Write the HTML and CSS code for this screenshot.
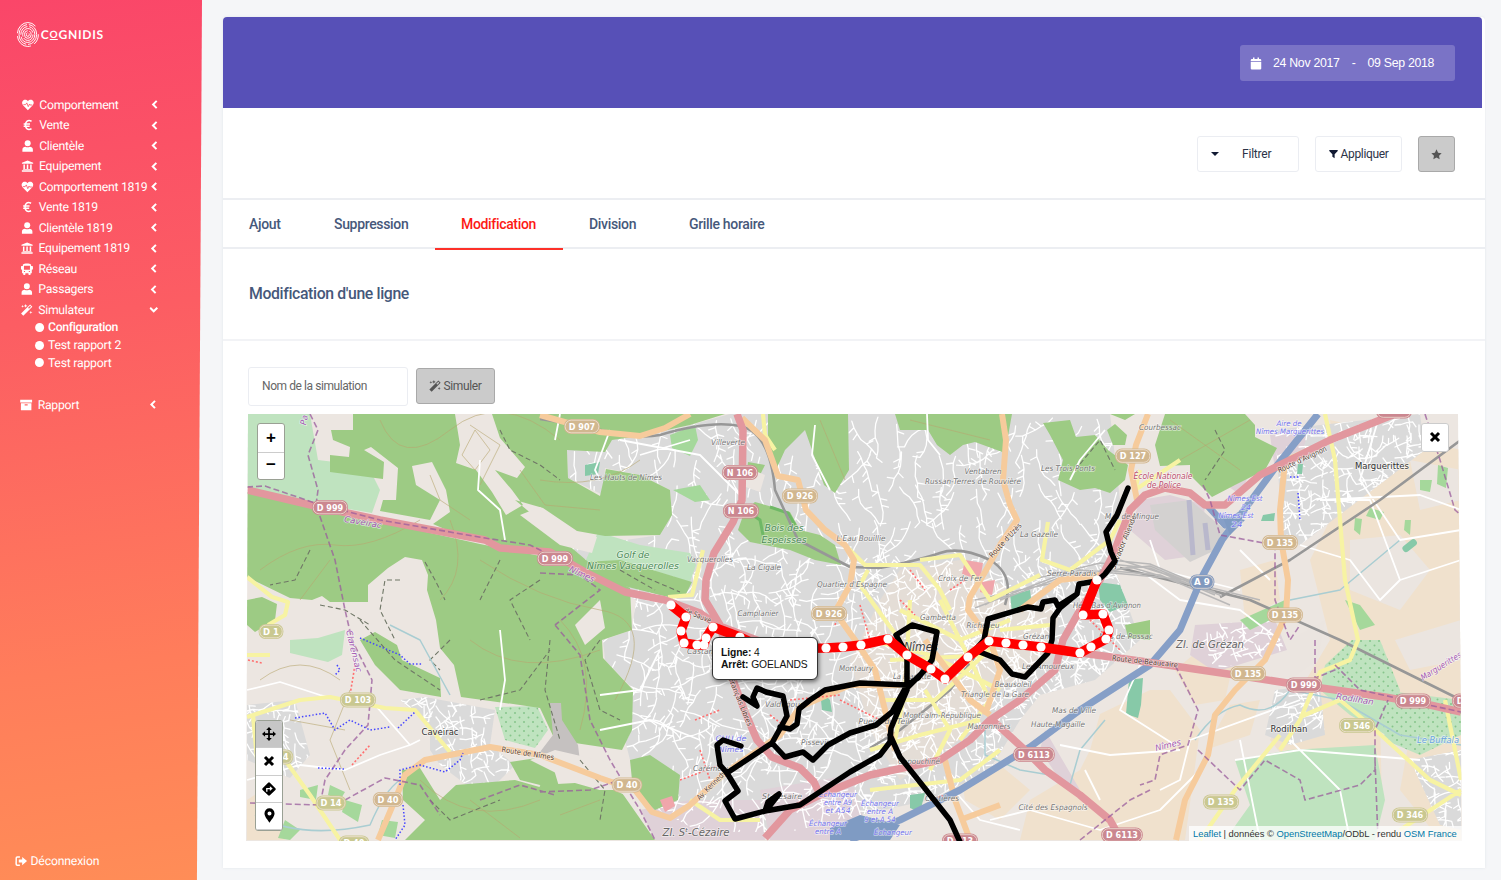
FILE: index.html
```html
<!DOCTYPE html>
<html lang="fr">
<head>
<meta charset="utf-8">
<title>Cognidis</title>
<link rel="stylesheet" href="styles.css">
</head>
<body>
<svg class="defs" width="0" height="0">
  <symbol id="i-heart" viewBox="0 0 16 16"><path fill="currentColor" d="M8 15 1.500 8.300C-.5 6 0 3 2 1.700 4 .6 6.500 1 8 3c1.500-2 4-2.400 6-1.300 2 1.300 2.500 4.300.5 6.600z"/><path d="M2 7.500h3l1.500-2.300 2 5 1.600-3.400.7 1.200H14" fill="none" stroke="#fb5265" stroke-width="1.100"/></symbol>
  <symbol id="i-euro" viewBox="0 0 16 16"><path d="M13 3C8 .5 5 3.500 5 8s3 7.500 8 5M2.500 6.500H11M2.500 9.500h8" fill="none" stroke="currentColor" stroke-width="2"/></symbol>
  <symbol id="i-user" viewBox="0 0 16 16"><circle cx="8" cy="4.200" r="4" fill="currentColor"/><path fill="currentColor" d="M1 15.500V13c0-3 2-4 4-4 2 1 4 1 6 0 2 0 4 1 4 4v2.500z"/></symbol>
  <symbol id="i-bank" viewBox="0 0 16 16"><path fill="currentColor" d="M8 .5 15.500 3.500V5H.5V3.500zM2.500 6h2v6H7V6h2v6h2.500V6h2v6l1 1H1.500l1-1zM.5 13.500h15v2H.5z"/></symbol>
  <symbol id="i-bus" viewBox="0 0 16 16"><path fill="currentColor" fill-rule="evenodd" d="M2.500 2C4 0 12 0 13.500 2v2H15q1 0 1 1v3q0 1-1.500 1v4.500H13V15q0 1-1 1h-1q-1 0-1-1v-1.500H6V15q0 1-1 1H4q-1 0-1-1v-1.500H1.500V9Q0 9 0 8V5q0-1 1-1h1.500zM4 3.500V9h8V3.500zM4 10.500v1.500h1.500v-1.500zm6.500 0v1.500H12v-1.500z"/></symbol>
  <symbol id="i-wand" viewBox="0 0 16 16"><path fill="currentColor" fill-rule="evenodd" d="M12.500.5 15.500 3.500 3.500 15.500.5 12.500zM12.500 2.300 9.800 5l1.200 1.200 2.700-2.700z"/><path fill="currentColor" d="m6.500 0 .7 1.800L9 2.500l-1.800.7L6.500 5l-.7-1.800L4 2.500l1.800-.7zM2.500 1l.5 1.500L4.500 3 3 3.500 2.500 5 2 3.500.5 3 2 2.500zM13.500 9l.6 1.500 1.600.5-1.600.7-.6 1.500-.6-1.500-1.500-.7 1.500-.5z"/></symbol>
  <symbol id="i-box" viewBox="0 0 16 16"><path fill="currentColor" fill-rule="evenodd" d="M0 1h16v3.500H0zM1 5.500h14V15H1zM6 7v1.500h4V7z"/></symbol>
  <symbol id="i-left" viewBox="0 0 10 10"><path d="M7 1 3 5l4 4" fill="none" stroke="currentColor" stroke-width="2.200"/></symbol>
  <symbol id="i-down" viewBox="0 0 10 10"><path d="M1 3l4 4 4-4" fill="none" stroke="currentColor" stroke-width="2.200"/></symbol>
  <symbol id="i-out" viewBox="0 0 16 16"><path fill="none" stroke="currentColor" stroke-width="2" d="M6.500 2.500H3q-1.500 0-1.500 1.500v8q0 1.500 1.500 1.500h3.500"/><path fill="currentColor" d="M5 6h4.500V2.500L16 8l-6.500 5.500V10H5z"/></symbol>
  <symbol id="i-cal" viewBox="0 0 16 16"><path fill="currentColor" d="M1 5V3.500Q1 2 2.500 2H4V0h2v2h4V0h2v2h1.500Q15 2 15 3.500V5zM1 6h14v8.500q0 1.500-1.500 1.500h-11Q1 16 1 14.500z"/></symbol>
  <symbol id="i-filter" viewBox="0 0 16 16"><path fill="currentColor" d="M.5 1h15v1.500L10 8.500V15.500L6 13V8.500L.5 2.500z"/></symbol>
  <symbol id="i-star" viewBox="0 0 16 16"><path fill="currentColor" d="m8 .5 2.300 4.800 5.200.7-3.800 3.700.9 5.300L8 12.500 3.400 15l.9-5.300L.5 6l5.200-.7z"/></symbol>
  <symbol id="i-move" viewBox="0 0 16 16"><path fill="currentColor" d="M8 0l3.200 3.500H9v3.500h3.500V4.800L16 8l-3.500 3.200V9H9v3.500h2.200L8 16l-3.200-3.500H7V9H3.500v2.200L0 8l3.500-3.200V7H7V3.500H4.800z"/></symbol>
  <symbol id="i-x" viewBox="0 0 12 12"><path d="M2 2l8 8M10 2l-8 8" stroke="currentColor" stroke-width="3" fill="none"/></symbol>
  <symbol id="i-dir" viewBox="0 0 16 16"><path fill="currentColor" d="M8 .2Q8.600.2 9 .8L15.300 7q.9 1 0 2L9 15.200q-1 .9-2 0L.7 9q-.9-1 0-2L7 .8Q7.400.2 8 .2z"/><path fill="none" stroke="#fff" stroke-width="1.500" d="M5.500 11V7.500h4"/><path fill="#fff" d="M9 4.800l3.200 2.700L9 10.200z"/></symbol>
  <symbol id="i-pin" viewBox="0 0 12 16"><path fill="currentColor" fill-rule="evenodd" d="M6 16C5 13.500.5 9.500.5 5.700a5.500 5.500 0 0 1 11 0C11.500 9.500 7 13.500 6 16zM6 3.600a2.200 2.200 0 1 0 0 4.400 2.200 2.200 0 0 0 0-4.400z"/></symbol>
</svg>

<div class="app">
  <aside class="sidebar">
    <div class="logo">
      <svg class="finger" viewBox="0 0 24 28" fill="none" stroke="#fff" stroke-width="1">
        <ellipse cx="11.500" cy="14" rx="1.500" ry="2" stroke-dasharray="7 2"/>
        <ellipse cx="11.500" cy="14" rx="3.500" ry="4" stroke-dasharray="17 2"/>
        <ellipse cx="11.500" cy="14" rx="5.400" ry="6.200" stroke-dasharray="14 1.500 18 2"/>
        <ellipse cx="11.500" cy="14" rx="7.300" ry="8.300" stroke-dasharray="22 2 12 2"/>
        <ellipse cx="11.500" cy="14" rx="9.200" ry="10.400" stroke-dasharray="15 2 28 2"/>
        <ellipse cx="11.500" cy="14" rx="11" ry="12.500" stroke-dasharray="11 4 20 3 26 9"/>
      </svg>
      <span class="brand">C<span class="brand-o">O</span>GNIDIS</span>
    </div>
    <nav class="menu">
      <a><svg><use href="#i-heart"/></svg><span>Comportement</span><svg class="chev"><use href="#i-left"/></svg></a>
      <a><svg><use href="#i-euro"/></svg><span>Vente</span><svg class="chev"><use href="#i-left"/></svg></a>
      <a><svg><use href="#i-user"/></svg><span>Clientèle</span><svg class="chev"><use href="#i-left"/></svg></a>
      <a><svg><use href="#i-bank"/></svg><span>Equipement</span><svg class="chev"><use href="#i-left"/></svg></a>
      <a><svg><use href="#i-heart"/></svg><span>Comportement 1819</span><svg class="chev"><use href="#i-left"/></svg></a>
      <a><svg><use href="#i-euro"/></svg><span>Vente 1819</span><svg class="chev"><use href="#i-left"/></svg></a>
      <a><svg><use href="#i-user"/></svg><span>Clientèle 1819</span><svg class="chev"><use href="#i-left"/></svg></a>
      <a><svg><use href="#i-bank"/></svg><span>Equipement 1819</span><svg class="chev"><use href="#i-left"/></svg></a>
      <a><svg><use href="#i-bus"/></svg><span>Réseau</span><svg class="chev"><use href="#i-left"/></svg></a>
      <a><svg><use href="#i-user"/></svg><span>Passagers</span><svg class="chev"><use href="#i-left"/></svg></a>
      <a><svg><use href="#i-wand"/></svg><span>Simulateur</span><svg class="chev"><use href="#i-down"/></svg></a>
      <div class="submenu">
        <a class="active">Configuration</a>
        <a>Test rapport 2</a>
        <a>Test rapport</a>
      </div>
      <a class="report"><svg><use href="#i-box"/></svg><span>Rapport</span><svg class="chev"><use href="#i-left"/></svg></a>
    </nav>
    <a class="logout"><svg><use href="#i-out"/></svg>Déconnexion</a>
  </aside>

  <main class="card">
    <header class="banner">
      <div class="dates"><svg><use href="#i-cal"/></svg><span>24 Nov 2017</span><span class="dash">-</span><span>09 Sep 2018</span></div>
    </header>
    <div class="filters">
      <button class="btn filter"><i class="caret"></i><span>Filtrer</span></button>
      <button class="btn apply"><svg><use href="#i-filter"/></svg><span>Appliquer</span></button>
      <button class="btn grey fav"><svg><use href="#i-star"/></svg></button>
    </div>
    <div class="tabs">
      <a>Ajout</a><a>Suppression</a><a class="on">Modification</a><a>Division</a><a>Grille horaire</a>
    </div>
    <h1 class="title">Modification d'une ligne</h1>
    <div class="form">
      <div class="input">Nom de la simulation</div>
      <button class="btn grey simulate"><svg><use href="#i-wand"/></svg><span>Simuler</span></button>
    </div>
    <div class="map">
      <svg class="tiles" viewBox="246 414 1216 427">
        <defs>
          <clipPath id="urban"><path d="M612 440 680 428 730 414 1110 414 1120 500 1110 555 1140 640 1095 680 1040 695 1020 720 990 770 930 800 860 815 790 832 700 832 640 800 625 740 625 715 634 690 605 660 603 640 632 630 636 600 605 580 560 572 542 552 660 535 672 515 670 490 640 475 605 468 603 495 568 478 567 450zM400 700 425 697 495 710 490 745 515 765 500 780 480 795 440 765 430 750 430 725zM1275 430 1420 414 1425 450 1300 545 1283 540zM1275 690 1320 685 1325 735 1290 745 1265 735zM1410 760 1461 750 1461 830 1440 825zM247 705 295 700 310 755 290 778 247 760zM1195 625 1270 620 1285 650 1215 670z"/></clipPath>
          <pattern id="trees" width="9" height="9" patternUnits="userSpaceOnUse"><circle cx="2" cy="2" r="1" fill="#86c58b"/><circle cx="6.500" cy="6.500" r="1" fill="#86c58b"/></pattern>
        </defs>
        <rect x="246" y="413" width="1216" height="428" fill="#ece6e1"/>
        <g fill="#f0e1cd">
          <path d="M1100 714 1150 690 1170 690 1200 730 1185 840H1020L1030 800 1080 770 1090 750zM1205 645 1235 655 1225 700 1195 705 1175 670zM1230 705 1260 700 1250 735 1205 750zM1330 420 1461 450V840H1380L1365 760 1310 790 1270 740 1330 640 1310 560 1340 500zM1240 570 1275 560 1280 600 1245 620zM1150 790 1175 790 1155 840H1130zM247 800 262 790 285 840H247zM960 770 1000 765 1030 790 1000 820 965 800z"/>
        </g>
        <g fill="#ebe5e0"><path d="M1350 540 1400 535 1430 570 1400 610 1350 590zM1380 720 1410 735 1400 790 1440 840H1350L1382 800zM1410 460 1461 470V500L1420 510zM1290 640 1325 620 1318 660 1290 680zM1395 640 1461 620V660L1410 670z"/></g>
        <path fill="#dadada" d="M612 440 680 428 730 414 1110 414 1120 500 1110 555 1140 640 1095 680 1040 695 1020 720 990 770 930 800 860 815 790 832 700 832 640 800 625 740 625 715 634 690 605 660 603 640 632 630 636 600 605 580 560 572 542 552 660 535 672 515 670 490 640 475 605 468 603 495 568 478 567 450zM400 700 425 697 495 710 490 745 515 765 500 780 480 795 440 765 430 750 430 725zM1275 430 1420 414 1425 450 1300 545 1283 540zM1275 690 1320 685 1325 735 1290 745 1265 735zM1410 760 1461 750V830L1440 825zM247 705 295 700 310 755 290 778 247 760zM520 570 550 564 560 600 545 625 538 600z"/>
        <path fill="#e4ddd6" d="M900 570 960 560 1010 590 1060 610 1050 660 1000 690 960 740 900 780 870 730 850 660 880 600z"/>
        <!-- industrial and airport -->
        <g fill="#dfd1d8"><path d="M1195 625 1275 620 1287 650 1215 672 1190 655zM1140 500 1170 495 1205 505 1200 555 1165 560 1130 530zM640 810 690 800 760 800 765 840H655zM760 790 850 775 870 840H770zM1045 730 1080 790 1060 780 1040 750zM1270 435 1310 425 1300 460 1275 470zM1220 480 1250 472 1240 495z"/></g>
        <path fill="#d3d1d0" d="M1150 505 1190 500 1225 530 1220 548 1190 562 1155 530z"/>
        <path stroke="#b9b8cc" stroke-width="5" d="M1189 500 1193 555M1205 523 1208 550" fill="none"/>
        <g id="streets" clip-path="url(#urban)"></g>
        <path fill="#bfe3bf" d="M247 414H310L318 460 368 466 380 490 372 513 320 504 247 488zM290 640 318 638 345 630 342 655 328 662 290 653zM1235 760 1290 750 1375 745 1385 800 1375 840H1225L1250 805zM1325 665 1352 640 1380 640 1400 690 1395 740 1350 715 1320 690zM1380 690 1461 700V735L1420 755 1385 740zM495 707 537 706 548 730 535 748 505 740zM598 532 640 545 690 553 696 565 690 582 640 566 585 562z"/>
        <path fill="url(#trees)" d="M1380 690 1461 700V735L1420 755 1385 740zM495 707 537 706 548 730 535 748 505 740zM1325 665 1352 640 1380 640 1400 690 1350 700z"/>
        <g class="forest">
          <path d="M353 414H455L460 445 456 463 476 470 492 492 506 515 523 505 512 490 495 470 517 478 525 467 500 438 492 414H725L690 425 640 436 612 440 605 452 567 450 568 478 600 496 606 469 640 475 670 490 672 515 660 535 605 536 577 531 543 508 515 500 545 525 600 572 630 588 632 630 602 640 603 658 633 690 632 730 622 750 555 740 540 708 520 705 461 697 454 665 440 648 436 620 427 590 428 575 422 560 405 557 388 568 368 585 368 602 330 602 322 596 312 600 290 598 247 577V492L315 508 390 524 480 544 545 557 546 550 500 545 470 540 433 524 450 512 446 490 432 462 412 466 416 485 440 500 430 520 380 511 383 500 396 500 398 468 371 447 364 450 384 462 383 479 330 472 330 455 349 457 350 447 333 440 331 430 353 430z"/>
          <path d="M768 414H815L805 430 785 450 775 472 768 455zM812 414H848L849 470 835 493 824 485 812 450 805 430zM748 462 765 465 760 475 745 485zM745 510 755 502 790 512 800 530 820 535 835 545 841 565 815 560 790 550 750 542 738 530zM895 414H1012L1005 453 975 442 963 445 950 455 937 445 928 430 900 430zM1043 423 1070 420 1076 437 1095 435 1108 450 1128 465 1125 480 1110 493 1095 488 1080 490 1058 480 1063 460 1050 435zM1107 430 1115 424 1127 435 1125 445 1113 445zM1165 414H1245L1255 425V437L1277 448 1265 470 1235 485 1212 497 1190 475V465L1160 466 1155 445z"/>
          <path d="M583 562 620 560 692 582 685 596 668 597 600 580zM360 640 375 632 397 645 402 660 440 678 441 697 400 690 375 665zM402 770 420 768 440 800 456 785 515 780 550 790 620 790 655 840H405L425 820 403 800zM630 760 650 755 680 775 678 800 655 810 633 790zM540 785 575 783 610 793 650 840H530zM247 600 262 597 277 604 275 620 255 632 247 625zM510 762 550 756 560 790 520 780z"/>
          <path d="M1110 414 1135 414 1125 420zM1125 625 1150 620 1150 640 1128 638z"/>
        </g>
        <path fill="none" stroke="#6fb866" stroke-width="3" d="M748 512 760 520 763 535M770 507 788 513 795 525"/>
        <g fill="#a5d89b"><path d="M300 790 318 785 316 800 300 797zM330 785 345 792 340 800 328 795zM345 800 362 805 358 822 342 812zM382 820 398 822 395 838 378 835zM255 800 275 803 270 812zM285 820 300 830 290 840 278 838zM670 435 695 425 698 440 690 456 672 448zM673 490 700 485 710 500 695 502zM1438 465 1448 468 1446 488 1437 484zM1370 508 1384 512 1380 520 1366 516zM1420 480 1432 480 1430 492 1420 490zM1240 620 1285 600 1290 610 1250 630zM1345 600 1360 605 1375 625 1360 630zM1405 520 1411 520 1410 535 1404 530zM1355 518 1362 519 1360 535 1354 530z"/></g>
        <g fill="#87c9a8"><path d="M1129 680 1143 678 1141 705 1138 718 1126 714zM1010 595 1030 590 1032 606 1012 612zM820 690 830 700 832 712 822 710zM910 795 925 793 920 812 910 808zM1098 582 1120 585 1128 605 1110 612 1100 600zM1298 464 1303 464 1302 474 1297 474zM1263 515 1275 513 1274 521 1261 521zM585 465 600 462 598 474 585 476z"/><rect x="1402" y="542" width="16" height="7" rx="3" transform="rotate(-38 1410 546)"/></g>
        <path fill="#c5c1c0" d="M550 703 561 703 562 720 578 745 580 762 540 752 553 735z"/>
        <path fill="#ece6e1" d="M540 507 575 531 597 537 592 553 560 545 520 515zM575 625 600 600 605 628 585 645zM740 465 765 475 760 492 740 485zM530 760 555 750 620 765 625 795 590 780 560 775z"/>
        <path fill="#f0a6ab" d="M965 560 983 563 980 580 962 574zM982 582 995 580 992 595 980 592zM660 800 672 796 675 806 665 812z"/>

        <g class="tracks">
          <path d="M260 570Q300 540 335 545T420 520M380 420Q400 470 450 430T560 440M450 520Q470 570 440 600M480 560Q540 600 600 610T615 700M330 560 300 600M540 480Q600 490 640 460M560 620Q600 660 580 730M470 640Q520 680 600 650M260 680Q300 650 340 680M350 690 330 740 350 790M290 720 345 730M420 780Q470 830 540 800M470 800 520 838M560 815 600 800M475 430 490 450 475 470 462 455zM470 425 500 445 480 485M1170 420 1240 470M1180 460 1250 420M820 420 845 480M910 420 990 440M520 470 545 505 600 510M430 475 440 500 470 520"/>
        </g>
        <g class="paths">
          <path d="M500 430 510 450 540 465 560 480M310 550 295 580 270 585M320 605 345 610 370 625M400 580 385 580 380 610 395 640M360 620 395 660 440 690M425 562 435 580 445 600M500 560 480 600M540 580 510 600 530 640M550 640 545 690 560 740M600 640 585 660 600 710 620 720M580 760 605 790 600 820M1215 430 1225 450 1205 480M1075 470 1100 440 1115 470M620 570 655 590M640 575 680 592M480 700 520 690 550 650M430 800 450 820 500 800M450 640 430 660 440 670"/>
        </g>
        <g class="water"><path d="M390 625 420 640 450 695M255 815Q300 840 370 825 385 790 400 780M985 730 985 755 1020 770 1050 775 1070 785 1080 750 1105 720M1195 740Q1215 710 1240 705 1270 720 1290 690L1340 700 1400 735 1461 745M1290 600 1340 590 1400 540"/></g>
        <g class="white">
          <path d="M247 690 280 682 320 695 340 700M247 780 300 765 345 770 380 755 410 745 420 740M375 705 410 745M480 460 478 490 500 510 505 540M500 630 505 680 500 710M1140 570 1180 600 1240 610 1280 640M1300 545 1350 560 1380 600 1400 580 1461 560M1330 500 1370 500 1400 580M1235 760 1300 750 1420 760M1290 740 1340 790 1350 840M1160 790 1180 780 1190 740 1300 700M1060 745 1110 755 1180 750M1085 770 1100 800M990 820 1030 810 1100 830 1160 810 1200 770M945 780 980 820 1020 830M1150 540 1160 570 1240 590M1240 550 1270 580M1380 414 1360 480 1400 540 1461 530M1240 740 1260 840M1320 500 1420 495 1461 510M600 695 640 690 660 650M600 730 650 720 700 740M1080 640 1140 665 1120 710 1175 745M560 414 555 440M610 430 595 470 600 480M620 440 700 455 745 500M690 440 640 455M815 425 812 455 830 490M927 414 928 440 940 455M1070 480 1080 460 1105 430"/>
        </g>
        <g class="rail">
          <path d="M540 419Q580 425 610 432T660 435Q710 420 740 426T775 490L798 540 850 567 880 568Q920 560 940 553T990 560Q1015 575 1005 605M870 748 900 730 950 690 980 650M1461 440 1380 500 1290 560 1220 597M1120 568 1250 600 1340 640 1461 700"/>
        </g>
        <g fill="none" stroke="#b9b8b8" stroke-width="1.400"><path d="M985 605 1030 580 1100 563 1150 568 1215 595M975 608 1060 575 1150 566 1222 596M1000 600 1080 570 1190 580M1110 560 1150 564 1200 585M975 600 1020 590 1130 567 1215 592M1100 570 1160 575 1230 605M1120 560 1200 585 1260 600"/></g>
        <g class="yellow">
          <path d="M247 577 272 597 288 602 285 615 268 625M247 717 300 700 330 697 385 708 415 710 450 752M247 655H270M285 760 310 795 340 840M253 715 258 770M1325 414 1335 460 1340 520 1345 580 1358 640 1350 660 1320 672 1300 720 1280 750M1300 717 1340 700 1370 725 1430 780 1461 795M1280 735 1235 790 1200 840M1445 700 1461 780M1400 830 1461 790M668 597 692 595 703 550M763 414 765 435 775 450M845 545 865 565 920 565 940 590 950 610M868 570 860 585 885 620 900 640M1048 522 1042 560 1070 570 1110 540 1120 520M920 560 960 555 990 600 1040 575M870 640 930 655 1000 690M900 610 960 640 1010 620M880 700 935 700 1000 640M910 600 905 690 895 740M940 600 960 640 990 700 960 740M890 660 990 655M925 690 950 730 930 770M870 790 960 780 1000 750M690 800 720 820 760 820M870 750 920 735 980 720M1000 630 1050 625M1140 470 1135 490 1180 460M1285 460 1330 440"/>
        </g>
        <path class="orange" d="M540 415 600 432 640 436 665 428 690 414M742 418 765 440 778 476 798 480 806 510 825 530 845 545 854 560 850 585 835 612 855 640 875 670 885 710 895 750M1002 414 1006 440 1003 480 1010 505 1017 520 1000 545 985 572 970 597 968 610 990 640 1000 670 985 715M1148 414 1136 445 1131 470 1137 500M1285 462 1280 510 1281 540 1288 580 1286 615 1265 660 1235 690 1215 715 1208 755 1185 800 1176 840M378 840 395 800 405 775 425 760 490 747 540 755 600 778 635 790 652 812 670 818 690 805 725 773 780 735 800 707 850 685 900 685M925 640 970 700 990 715M945 760 955 800 970 840M960 820 1000 805M1020 610 1060 580 1100 575"/>
        <path class="blue" d="M1318 414 1275 468 1222 540 1203 575 1180 630 1150 665 1080 710 1030 747 960 790 900 820 850 840M1207 505 1225 525 1240 515"/>
        <path d="M830 828 860 815 900 825 890 840H830zM1222 515 1245 520 1230 535z" fill="#7f9bc3"/>
        <path class="trunk" d="M247 490 315 506 380 520 485 540 500 548 550 552 585 572 625 592 665 600 700 613 717 625 770 645M737 414 743 430 742 500 733 522 714 553 706 580 705 600 720 625 733 680 745 712 757 740 772 757 800 768 814 782 820 795M765 838 790 810 820 795 870 775 940 760 970 740 990 720 1020 700 1055 670 1063 640 1080 610 1100 580 1113 555 1130 510 1145 495 1165 488 1190 493 1205 505 1225 505 1260 475 1330 440 1395 414M990 718 1025 750 1045 770 1080 795 1110 820 1120 838M1045 648 1140 661 1235 675 1300 685 1385 697 1430 705 1461 712"/>
        <g class="borders"><path d="M310 414 318 430 308 455 318 490 316 505 335 560 345 610 352 640 372 680 368 725 345 750 325 780 320 805 250 803M247 487 265 486 315 503 380 520 485 538 530 545 560 560M540 573 580 575 600 590 555 625M555 625 580 655 590 720 610 760 640 810 655 840M345 800 385 778 420 785 440 815M480 800 520 785 555 795M1203 485 1210 500 1220 535 1275 545 1275 600 1290 640 1300 625M1140 661 1175 665 1198 710 1188 745 1160 755 1155 780 1140 785M1198 750 1240 790 1265 760 1300 780 1305 800 1360 785 1375 770 1375 730 1388 700M1425 414 1440 460 1455 510 1461 515M1080 840 1130 800 1150 790M1335 665 1360 690 1461 712M1315 640 1315 678 1340 668M1375 760 1378 840M540 792 590 790 620 780"/></g>
        <g class="bluedots"><path d="M360 638 400 655 410 664 422 664M295 718 325 713 335 730 350 720 370 730 390 727M398 728 415 712M318 768 345 769M400 785 400 770 420 765 445 772 460 760 463 753M403 805 405 825 395 840M337 665 340 670 335 675M1298 493 1300 520M1290 477 1300 477"/></g>
        <g class="reddots"><path d="M248 660 262 663M352 765 370 745M355 665 350 695M680 780 720 765M770 715 790 730M790 700 840 695M700 750 710 780M840 700 880 720M910 570 925 590M900 600 915 615M950 590 965 580M930 800 945 795M1090 620 1120 650M860 605 870 640M835 625 840 610M695 720 720 710"/></g>
        <g id="labels"></g>
        <g id="shields"></g>

        <g class="network">
          <path d="M1128 488 1117 515 1106 532 1111 552 1115 561 1105 574 1097 581 1079 584 1077 594 1058 606 1055 600 1043 602 1041 609 1028 607 988 619 984 640 968 658 945 680M1077 594 1060 608 1053 618 1052 640 1048 653 1025 677 1012 674 1000 660 980 652"/>
          <path d="M907 655 896 635 912 625 937 632 932 660 918 678 907 685 907 655M925 670 905 690M907 685 860 683 845 686 825 690 810 700 799 709 797 724 790 729 780 727M743 697 757 706 753 697 757 688 766 692 783 696 787 716 772 743 727 773 720 765 717 745 723 740 741 746M772 743 785 757 803 752 813 760 828 745 850 733 876 725 892 712 907 685M727 773 738 791 725 801 735 819 765 811 800 805 850 772 880 755 890 742 891 728 907 690M765 811 768 802 779 794 768 808M890 735 900 757 950 820 960 842"/>
        </g>
        <polyline id="line4" points="671,605 686,617 681,631 684,643 697,645 704,645 706,638 713,627 740,637 765,649 826,648 843,647 861,645 888,639 907,655 931,669 945,679 968,657 989,641 1006,643 1023,645 1041,647 1080,653 1091,647 1106,639 1109,630 1103,614 1083,615 1097,580"/>
        <g id="stops"></g>
      </svg>

      <div class="zoom"><b>+</b><b>−</b></div>
      <div class="close"><svg><use href="#i-x"/></svg></div>
      <div class="tools">
        <i class="sel"><svg width="14" height="14"><use href="#i-move"/></svg></i>
        <i><svg width="12" height="12"><use href="#i-x"/></svg></i>
        <i><svg width="14" height="14"><use href="#i-dir"/></svg></i>
        <i><svg width="11" height="15"><use href="#i-pin"/></svg></i>
      </div>
      <div class="popup"><div><b>Ligne:</b> 4</div><div><b>Arrêt:</b> GOELANDS</div></div>
      <div class="credit"><a>Leaflet</a> | données © <a>OpenStreetMap</a>/ODbL - rendu <a>OSM France</a></div>
    </div>
  </main>
</div>
<script src="map.js"></script>
</body>
</html>
```
FILE: styles.css
```css
* { box-sizing: border-box; }
body { margin: 0; background: #f5f6f8; font-family: Roboto, "Liberation Sans", sans-serif; overflow: hidden; }
.defs { position: absolute; }
.app { display: flex; width: 1501px; height: 880px; }

.sidebar {
  width: 202px; flex: none; height: 880px; padding: 20px 0 10px 0; margin-right: 21px;
  display: flex; flex-direction: column; color: #fff; position: relative;
  transform: skewX(-0.33deg); transform-origin: 0 0;
  background: linear-gradient(172deg, #fa4669 0%, #fc5d63 36%, #ff7d5b 75%, #ff8d57 100%);
  box-shadow: -8px 0 0 #fc6562;
}
.logo { display: flex; align-items: center; height: 28px; padding-left: 17px; }
.finger { width: 23px; height: 27px; }
.brand { font: 700 12px Lato, sans-serif; letter-spacing: .75px; margin-left: 1px; }
.brand-o { display: inline-block; font-size: 10px; line-height: 9px; border-bottom: 1.500px solid #fff; vertical-align: 1px; letter-spacing: 0; margin-right: 1px; }
.menu { margin-top: 46.500px; display: flex; flex-direction: column; }
.menu > a { display: flex; align-items: center; height: 20.500px; padding-left: 22px; font-size: 12.200px; letter-spacing: -.24px; width: 162px; white-space: nowrap; }
.menu > a > svg { width: 13px; height: 12px; flex: none; margin-right: 5px; }
.menu > a > span { flex: 1; }
.menu > a > .chev { width: 9px; height: 9px; margin: 0 2px 0 0; }
.submenu { display: flex; flex-direction: column; padding-left: 37px; margin-top: -1.500px; }
.submenu a { display: flex; align-items: center; height: 17.800px; font-size: 12.200px; letter-spacing: -.2px; gap: 4px; }
.submenu a::before { content: ""; width: 9px; height: 9px; border-radius: 50%; background: #fff; }
.submenu .active { font-weight: 500; letter-spacing: -.34px; }
.menu > .report { margin-top: 22.500px; }
.logout { display: flex; align-items: center; gap: 4px; padding-left: 19.500px; font-size: 12.200px; letter-spacing: -.15px; margin-top: auto; height: 19px; }
.logout svg { width: 12px; height: 12px; }

.card { width: 1262px; height: 851px; margin-top: 17px; background: #fff; box-shadow: 0 0 3px #e1e4ea; border-radius: 4px 4px 0 0; display: flex; flex-direction: column; clip-path: polygon(-3px -3px, 1262px -3px, 1268px 855px, -5px 855px); }
.banner { height: 91px; width: 1259px; background: #5750b7; border-radius: 4px 4px 0 0; display: flex; justify-content: flex-end; padding: 28px 27px 0 0; }
.dates { height: 36px; width: 215px; background: #7a73c6; border-radius: 3px; color: #fff; display: flex; align-items: center; font: 12.300px "Liberation Sans", sans-serif; letter-spacing: -.28px; padding-left: 10px; white-space: nowrap; }
.dates svg { width: 12px; height: 13px; margin-right: 11px; }
.dates .dash { margin: 0 12px; }
.filters { height: 90px; display: flex; justify-content: flex-end; padding: 28px 30px 0 0; }
.btn { height: 36px; border: 1px solid #ebedf2; border-radius: 3px; background: #fff; color: #2c3347; font: 12px Roboto, sans-serif; letter-spacing: -.35px; display: flex; align-items: center; justify-content: center; padding: 0; }
.filter { width: 102px; margin-right: 16px; justify-content: flex-start; padding-left: 13px; letter-spacing: -.2px; }
.caret { border: 4px solid transparent; border-top-color: #111a33; border-bottom: 0; margin-right: 23px; }
.apply { width: 87px; margin-right: 16px; gap: 3px; }
.apply svg { width: 9px; height: 10px; color: #111a33; }
.grey { background: #cbcbcb; border-color: #a9a9a9; color: #555; }
.fav { width: 37px; }
.fav svg { width: 11px; height: 11px; }
.tabs { height: 51px; border-top: 2px solid #eceef2; border-bottom: 2px solid #eceef2; display: flex; width: 1262px; }
.tabs a { height: 50px; padding: 15px 26px 0; font: 500 14px/18px Roboto, sans-serif; letter-spacing: -.33px; color: #46587a; white-space: nowrap; }
.tabs .on { color: #fd1a14; border-bottom: 2px solid #fd3129; }
.tabs a:nth-child(1) { width: 85px; }
.tabs a:nth-child(2) { width: 127px; }
.tabs a:nth-child(3) { width: 128px; }
.tabs a:nth-child(4) { width: 100px; }
.title { margin: 0; height: 92px; border-bottom: 2px solid #f2f3f6; padding: 36px 26px 0; font: 500 15.800px/18px Roboto, sans-serif; letter-spacing: -.37px; color: #46587a; }
.form { display: flex; height: 73px; padding: 26px 25px 0; }
.input { width: 160px; height: 39px; border: 1px solid #ebedf2; border-radius: 3px; font: 12px/37px Roboto, sans-serif; letter-spacing: -.43px; color: #666; padding-left: 13px; }
.simulate { width: 79px; margin: 1px 0 0 8px; gap: 2px; }
.simulate svg { width: 12px; height: 12px; }

.map { position: relative; width: 1216px; height: 427px; margin-left: 23px; clip-path: polygon(2px 0, 1212px 0, 1216px 100%, 0 100%); font-family: "Liberation Sans", sans-serif; }
.tiles { display: block; width: 1216px; height: 427px; }
.tiles g, .trunk, .orange, .blue { stroke-linejoin: round; }
.forest { fill: #9dcb84; }
.tracks, .paths, .water, .white, .yellow, .orange, .blue, .trunk, .rail, .borders, .bluedots, .reddots, .network { fill: none; }
.tracks { stroke: #b7a66f; stroke-width: 1; opacity: .6; }
.paths { stroke: #6f7666; stroke-width: 1.100; stroke-dasharray: 5 3; }
.water { stroke: #a9cdd2; stroke-width: 1.500; }
.white { stroke: #fff; stroke-width: 1.800; }
#streets { fill: none; stroke: #fff; stroke-width: 1.300; stroke-linecap: round; stroke-linejoin: round; }
.rail { stroke: #979797; stroke-width: 2.600; }
.yellow { stroke: #f7f3a3; stroke-width: 4.200; }
.orange { stroke: #f6cb9c; stroke-width: 6; }
.blue { stroke: #869fc7; stroke-width: 7; }
.trunk { stroke: #e2979e; stroke-width: 7.500; }
.borders { stroke: #9a5c9c; stroke-width: 1.600; stroke-dasharray: 6 3; opacity: .75; }
.bluedots { stroke: #4545ff; stroke-width: 1.500; stroke-dasharray: 1.500 2; }
.reddots { stroke: #ff6f6f; stroke-width: 1.600; stroke-dasharray: 2 2; }
.network { stroke: #000; stroke-width: 5.500; stroke-linecap: round; }
#line4 { fill: none; stroke: #f00; stroke-width: 9.500; stroke-linejoin: round; }
#stops { fill: #fff; }
#labels text { font-family: "DejaVu Sans", sans-serif; paint-order: stroke; stroke: rgba(255,255,255,.55); stroke-width: 1.500px; text-anchor: middle; }
#shields text { font: bold 8.800px "DejaVu Sans", sans-serif; fill: #fff; text-anchor: middle; }

.zoom, .tools, .close { position: absolute; background: #fff; border: 1px solid #9aa094; border-radius: 3px; color: #000; }
.zoom { left: 11px; top: 9px; width: 28px; height: 57px; }
.zoom b { display: block; height: 28px; font: bold 17px/27px "Liberation Sans", sans-serif; text-align: center; }
.zoom b + b { border-top: 1px solid #ccc; height: 27px; line-height: 24px; }
.close { left: 1175px; top: 9px; width: 28px; height: 29px; display: flex; align-items: center; justify-content: center; border-color: #ccc; }
.close svg { width: 12px; height: 12px; margin-top: -2px; }
.tools { left: 9px; top: 306px; width: 28px; height: 111px; overflow: hidden; }
.tools i { display: flex; height: 27.250px; align-items: center; justify-content: center; border-bottom: 1px solid #ccc; }
.tools .sel { background: #c6c6c6; }
.popup { position: absolute; left: 466px; top: 223px; width: 106px; height: 43px; border: 1px solid #333; border-radius: 6px; background: #fff; box-shadow: 1px 2px 4px rgba(0,0,0,.5); font-size: 10.300px; letter-spacing: -.1px; line-height: 12px; padding: 9px 0 0 8px; color: #111; white-space: nowrap; }
.credit { position: absolute; right: 0; bottom: 0; height: 15px; width: 273px; background: rgba(255,255,255,.75); font-size: 9.400px; letter-spacing: -.02px; line-height: 15px; color: #333; padding-left: 4px; white-space: nowrap; }
.credit a { color: #0078a8; }
```
FILE: map.js
```js
const NS = 'http://www.w3.org/2000/svg';
function add(parent, tag, attrs, text) {
  const el = document.createElementNS(NS, tag);
  for (const k in attrs) el.setAttribute(k, attrs[k]);
  if (text) el.textContent = text;
  parent.appendChild(el);
  return el;
}

// Residential streets: seeded wandering lines with side branches.
let seed = 4711;
const rnd = () => (seed = (seed * 16807) % 2147483647) / 2147483647;
function walk(x, y, angle, steps, len) {
  let d = `M${x.toFixed(1)} ${y.toFixed(1)}`;
  const branches = [];
  for (let i = 0; i < steps; i++) {
    angle += (rnd() - 0.5) * 0.8;
    x += Math.cos(angle) * len;
    y += Math.sin(angle) * len;
    d += `L${x.toFixed(1)} ${y.toFixed(1)}`;
    if (rnd() < 0.4) {
      const a = angle + (rnd() < 0.5 ? 1.1 : -1.1);
      branches.push(`M${x.toFixed(1)} ${y.toFixed(1)}l${(Math.cos(a) * len).toFixed(1)} ${(Math.sin(a) * len).toFixed(1)}`);
    }
  }
  return d + branches.join('');
}
let streets = '';
for (let gx = 550; gx < 1150; gx += 20) {
  for (let gy = 415; gy < 840; gy += 34) {
    streets += walk(gx + rnd() * 12, gy + rnd() * 12, 1.2 + rnd() * 0.8, 6, 7);
  }
}
for (let gx = 610; gx < 860; gx += 30) {
  for (let gy = 560; gy < 830; gy += 30) {
    streets += walk(gx + rnd() * 12, gy + rnd() * 12, rnd() - 0.5, 6, 7);
  }
}
for (let gx = 860; gx < 1130; gx += 14) {
  for (let gy = 565; gy < 800; gy += 14) {
    streets += walk(gx + rnd() * 6, gy + rnd() * 6, rnd() < 0.5 ? -0.4 : 1.1, 3, 6);
  }
}
for (const [x0, y0, x1, y1] of [[400, 695, 520, 790], [1275, 414, 1425, 540], [1265, 685, 1330, 745], [1410, 755, 1460, 830], [247, 700, 310, 775], [1195, 622, 1285, 670]]) {
  for (let x = x0; x < x1; x += 12) {
    for (let y = y0; y < y1; y += 11) streets += walk(x, y, rnd() < 0.5 ? -0.3 : 1.3, 3, 6);
  }
}
add(document.getElementById('streets'), 'path', { d: streets });

// text, centre x, baseline y, width, style, rotation
const styles = {
  s: ['#777', 7.8, 'italic'], g: ['#4c8b58', 9, 'italic'], p: ['#a45bb5', 8.5, 'italic'],
  b: ['#7575ee', 7.5, 'italic'], t: ['#333', 8.6, 'normal'], r: ['#bd5070', 8, 'italic'],
  z: ['#666', 10, 'italic'], o: ['#5a4638', 7.5, 'normal'], n: ['#444', 13, 'italic'], w: ['#6aa5e0', 8.5, 'italic']
};
const labels = [
  ['Villeverte', 728, 445, 34, 's'], ['Les Hauts de Nîmes', 626, 480, 72, 's'], ['Ventabren', 983, 474, 37, 's'],
  ['Russan-Terres de Rouvière', 973, 484, 96, 's'], ['Les Trois Ponts', 1068, 471, 54, 's'], ['Courbessac', 1160, 430, 42, 's'],
  ["L'Eau Bouillie", 861, 541, 49, 's'], ['Vacquerolles', 710, 562, 46, 's'], ['La Cigale', 764, 570, 34, 's'],
  ["Quartier d'Espagne", 852, 587, 70, 's'], ['Camplanier', 758, 616, 41, 's'], ['La Gazelle', 1039, 537, 38, 's'],
  ['Serre-Paradis', 1072, 576, 50, 's'], ['Croix de Fer', 960, 581, 44, 's'], ['Gambetta', 938, 620, 36, 's'],
  ['Richelieu', 983, 628, 33, 's'], ['Mas de Mingue', 1132, 519, 54, 's'], ["Hem  Bas d'Avignon", 1107, 608, 68, 's'],
  ['Mas de Possac', 1126, 639, 54, 's'], ['Grézan', 1036, 639, 26, 's'], ['Les Amoureux', 1048, 669, 52, 's'],
  ['Montaury', 856, 671, 34, 's'], ['Castanet', 704, 654, 34, 's'], ['Beausoleil', 1013, 687, 37, 's'],
  ['Triangle de la Gare', 995, 697, 68, 's'], ['Mas de Ville', 1074, 713, 44, 's'], ['Haute-Magaille', 1058, 727, 54, 's'],
  ['Marronniers', 989, 729, 43, 's'], ['Montcalm-République', 942, 718, 78, 's'], ['Puech du Teil', 884, 724, 51, 's'],
  ['Capouchiné', 919, 764, 42, 's'], ['Valdegour', 784, 707, 38, 's'], ['Pissevin', 816, 745, 30, 's'],
  ['Carémeau', 712, 771, 38, 's'], ['St-Césaire', 782, 799, 40, 's'], ['Cité des Espagnols', 1053, 810, 69, 's'],
  ['La Placette', 912, 679, 38, 's'], ['Costières', 942, 801, 34, 's'],
  ['Golf de', 633, 558, 33, 'g'], ['Nîmes Vacquerolles', 633, 569, 92, 'g'], ['Bois des', 784, 531, 39, 'g'], ['Espeisses', 784, 543, 45, 'g'],
  ['Caveirac', 363, 525, 38, 'p', 10], ['Nîmes', 582, 577, 27, 'p', 25], ['Clarensac', 354, 654, 43, 'p', 76], ['Nîmes', 1168, 748, 26, 'p', -14],
  ['Rodilhan', 1355, 702, 38, 'p', 9], ['Marguerittes', 1441, 669, 46, 'p', -32], ['Pa', 304, 423, 10, 'p', -80],
  ['Aire de', 1289, 426, 25, 'b'], ['Nîmes-Marguerittes', 1290, 434, 68, 'b'], ['Nîmes-Est', 1245, 501, 35, 'b'], ['24', 1246, 510, 10, 'b'],
  ['Nîmes-Est', 1236, 518, 35, 'b'], ['24', 1237, 527, 11, 'b'], ['CHU de', 731, 741, 31, 'b'], ['Nîmes', 731, 752, 25, 'b'],
  ['Échangeur', 838, 797, 38, 'b'], ['entre A9', 838, 805, 28, 'b'], ['et A54', 838, 813, 25, 'b'], ['Échangeur', 880, 806, 38, 'b'],
  ['entre A', 880, 814, 26, 'b'], ['9 et A 54', 880, 822, 31, 'b'], ['Échangeur', 828, 826, 38, 'b'], ['entre A', 828, 834, 26, 'b'], ['Échangeur', 893, 835, 38, 'b'],
  ['École Nationale', 1163, 479, 59, 'r'], ['de Police', 1164, 488, 34, 'r'],
  ['Caveirac', 440, 735, 37, 't'], ['Rodilhan', 1289, 732, 37, 't'], ['Marguerittes', 1382, 469, 54, 't'],
  ['ZI. de Grézan', 1210, 648, 68, 'z'], ['ZI. Sᵗ-Cézaire', 696, 836, 67, 'z'], ['Nîmes', 921, 651, 34, 'n'],
  ['Route de Nîmes', 528, 756, 53, 'o', 9], ["Route d'Avignon", 1302, 462, 53, 'o', -25], ["Route d'Uzès", 1005, 543, 44, 'o', -47],
  ['Route de Beaucaire', 1145, 664, 66, 'o', 6], ['Av. Kennedy', 711, 788, 38, 'o', -45], ['Français Libres', 741, 705, 51, 'o', 68],
  ['Salvador Allende', 1123, 545, 58, 'o', -68], ['de Sauve', 698, 618, 28, 'o', 22], ['Le Buffala', 1438, 743, 42, 'w']
];
for (const [text, x, y, w, kind, rot] of labels) {
  const [fill, size, style] = styles[kind];
  const a = { x, y, textLength: w, lengthAdjust: 'spacingAndGlyphs', fill, 'font-size': size, 'font-style': style };
  if (rot) a.transform = `rotate(${rot} ${x} ${y - 3})`;
  add(document.getElementById('labels'), 'text', a, text);
}

// road number badges: text, centre x, centre y, colour
const red = '#cb8790', tan = '#d1b78f', olive = '#c9c890', blue = '#8199be';
for (const [text, x, y, fill] of [
  ['D 999', 330, 507.5, red], ['D 999', 555, 558.5, red], ['N 106', 740, 472.5, red], ['N 106', 741, 511, red],
  ['D 907', 582, 426.5, tan], ['D 926', 800, 496, tan], ['D 926', 829, 613.5, tan], ['D 127', 1133, 456, tan],
  ['D 135', 1280, 542.5, tan], ['D 135', 1285, 615, tan], ['D 135', 1248, 673.5, tan], ['D 999', 1304, 685, red],
  ['D 999', 1413, 701, red], ['D 999', 1470, 701, red], ['D 999', 1394, 411, red], ['D 546', 1357, 725.5, olive], ['D 135', 1221, 802, olive],
  ['D 346', 1410, 815, olive], ['D 103', 358, 700, olive], ['D 1', 271, 631.5, olive], ['D 14', 331, 803, olive],
  ['D 14', 278, 757, olive], ['D 40', 388, 799.5, tan], ['D 40', 627, 785, tan], ['D 6113', 1034, 754.5, red], ['D 6113', 1122, 835, red],
  ['D 613', 960, 841, red], ['D 40', 354, 843, olive], ['A 9', 1202, 582, blue]
]) {
  const g = document.getElementById('shields');
  const w = text.length * 5.6 + 8;
  add(g, 'rect', { x: x - w / 2, y: y - 7.5, width: w, height: 15, rx: 7, fill });
  add(g, 'rect', { x: x - w / 2 + 1.2, y: y - 6.3, width: w - 2.4, height: 12.6, rx: 6, fill, stroke: '#f0e2d5', 'stroke-width': 0.8 });
  add(g, 'text', { x, y: y + 3.3, textLength: text.length * 5.3, lengthAdjust: 'spacingAndGlyphs' }, text);
}

for (const p of document.getElementById('line4').points) {
  if (p.x === 765) continue;
  add(document.getElementById('stops'), 'circle', { cx: p.x, cy: p.y, r: 4.6 });
}
```
